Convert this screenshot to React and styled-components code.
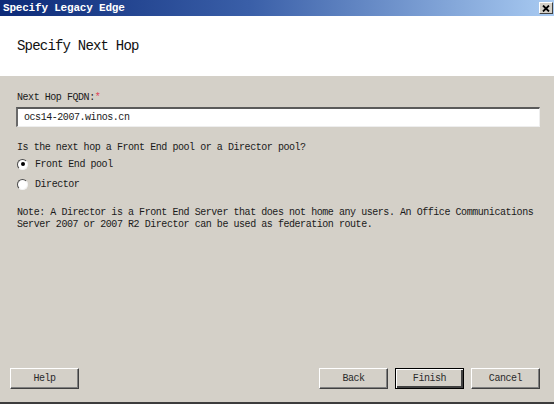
import React from 'react'
import styled, { createGlobalStyle } from 'styled-components'

const GlobalStyle = createGlobalStyle`
  html, body {
    margin: 0;
    padding: 0;
    background: #d4d0c8;
  }
`

const mono = `"Liberation Mono", "DejaVu Sans Mono", monospace`

const Window = styled.div`
  width: 554px;
  height: 404px;
  box-sizing: border-box;
  display: flex;
  flex-direction: column;
  background: #d4d0c8;
  border-bottom: 2px solid #3c3c3c;
  font-family: ${mono};
  font-size: 10px;
  letter-spacing: -0.45px;
  color: #1a1a1a;
`

const TitleBar = styled.div`
  height: 16px;
  display: flex;
  align-items: center;
  justify-content: space-between;
  padding: 0 1px 0 3px;
  background: linear-gradient(to right, #0c2a78 0%, #3a5fa8 45%, #a9cbf2 100%);
`

const TitleText = styled.span`
  color: #fff;
  font-weight: bold;
  font-size: 11px;
  letter-spacing: -0.2px;
`

const CloseBox = styled.div`
  width: 14px;
  height: 12px;
  box-sizing: border-box;
  display: flex;
  align-items: center;
  justify-content: center;
  background: #d4d0c8;
  border: 1px solid;
  border-color: #fff #404040 #404040 #fff;
`

const Header = styled.div`
  height: 60px;
  background: #fff;
  display: flex;
  align-items: center;
  padding-left: 17px;
`

const Heading = styled.h1`
  margin: 0;
  font-weight: normal;
  font-size: 14px;
  letter-spacing: -0.8px;
  color: #111;
`

const Body = styled.div`
  flex: 1;
  display: flex;
  flex-direction: column;
  padding: 16px 14px 0 16px;
`

const Line = styled.div`
  height: 12px;
  line-height: 12px;
  white-space: pre;
  margin-top: ${p => p.$gap || 0}px;
  padding-left: 1px;
`

const Required = styled.span`
  color: #e0405a;
`

const TextBox = styled.div`
  margin-top: 3px;
  height: 20px;
  box-sizing: border-box;
  display: flex;
  align-items: center;
  padding-left: 6px;
  background: #fff;
  border-style: solid;
  border-width: 2px 1px 1px 2px;
  border-color: #5a5a5a #eeeeee #eeeeee #6a6a6a;
`

const RadioGroup = styled.div`
  display: flex;
  flex-direction: column;
`

const RadioRow = styled.label`
  height: 20px;
  display: flex;
  align-items: center;
  gap: 7px;
  padding-left: 1px;
`

const RadioCircle = styled.span`
  width: 11px;
  height: 11px;
  box-sizing: border-box;
  border-radius: 50%;
  background: #fff;
  border: 1.5px solid;
  border-color: #4a4a4a #f4f4f4 #f4f4f4 #4a4a4a;
  display: flex;
  align-items: center;
  justify-content: center;
`

const RadioDot = styled.span`
  width: 4px;
  height: 4px;
  border-radius: 50%;
  background: #000;
`

const Note = styled.div`
  margin-top: 13px;
  padding-left: 1px;
  line-height: 12px;
  white-space: pre;
`

const Footer = styled.div`
  display: flex;
  align-items: center;
  padding: 0 14px 13px 10px;
`

const Spacer = styled.div`
  flex: 1;
`

const Buttons = styled.div`
  display: flex;
  gap: 7px;
`

const Button = styled.button`
  width: 69px;
  height: 21px;
  box-sizing: border-box;
  padding: 0;
  background: #d4d0c8;
  font-family: ${mono};
  font-size: 10px;
  letter-spacing: -0.45px;
  color: #2a2a2a;
  border: 1px solid;
  border-color: ${p => (p.$default ? '#000' : '#fff #404040 #404040 #fff')};
  box-shadow: ${p =>
    p.$default
      ? 'inset 1px 1px #fff, inset -2px -2px #404040'
      : 'inset -1px -1px #808080'};
`

function Radio({ checked, children }) {
  return (
    <RadioRow>
      <RadioCircle>{checked && <RadioDot />}</RadioCircle>
      <span>{children}</span>
    </RadioRow>
  )
}

export default function App() {
  return (
    <>
      <GlobalStyle />
      <Window>
        <TitleBar>
          <TitleText>Specify Legacy Edge</TitleText>
          <CloseBox>
            <svg width="8" height="7" viewBox="0 0 8 7">
              <path d="M1 0.5 L7 6.5 M7 0.5 L1 6.5" stroke="#000" strokeWidth="1.8" />
            </svg>
          </CloseBox>
        </TitleBar>
        <Header>
          <Heading>Specify Next Hop</Heading>
        </Header>
        <Body>
          <Line>
            Next Hop FQDN:<Required>*</Required>
          </Line>
          <TextBox>ocs14-2007.winos.cn</TextBox>
          <Line $gap={15}>Is the next hop a Front End pool or a Director pool?</Line>
          <RadioGroup>
            <Radio checked>Front End pool</Radio>
            <Radio>Director</Radio>
          </RadioGroup>
          <Note>
            {'Note: A Director is a Front End Server that does not home any users. An Office Communications\nServer 2007 or 2007 R2 Director can be used as federation route.'}
          </Note>
        </Body>
        <Footer>
          <Button>Help</Button>
          <Spacer />
          <Buttons>
            <Button>Back</Button>
            <Button $default>Finish</Button>
            <Button>Cancel</Button>
          </Buttons>
        </Footer>
      </Window>
    </>
  )
}
